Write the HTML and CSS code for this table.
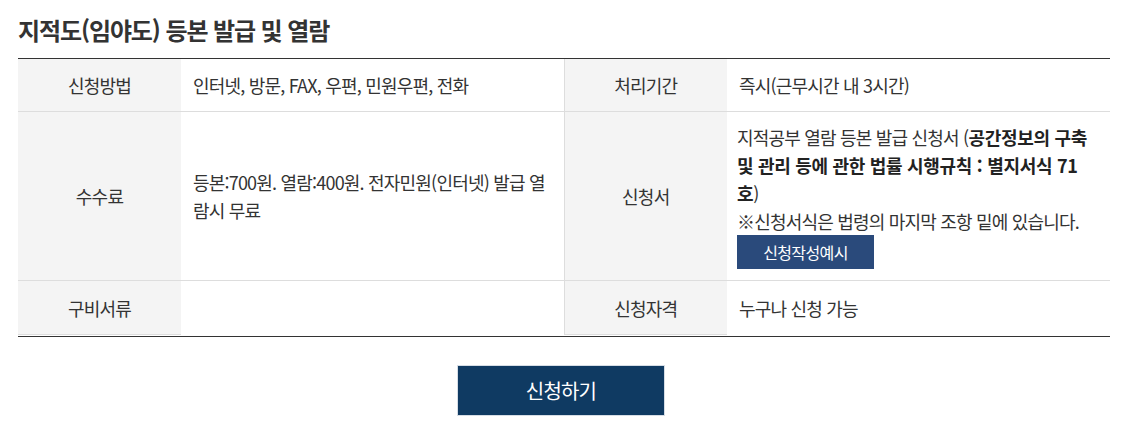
FILE: index.html
```html
<!DOCTYPE html>
<html lang="ko">
<head>
<meta charset="utf-8">
<title>지적도(임야도) 등본 발급 및 열람</title>
<link rel="stylesheet" href="styles.css">
</head>
<body>
<div class="page">
  <h2 class="title">지적도(임야도) 등본 발급 및 열람</h2>
  <div class="table-wrap">
  <table class="info">
    <colgroup>
      <col class="c-th"><col class="c-td"><col class="c-th"><col class="c-td">
    </colgroup>
    <tr>
      <th>신청방법</th>
      <td>인터넷, 방문, FAX, 우편, 민원우편, 전화</td>
      <th class="mid">처리기간</th>
      <td>즉시(근무시간 내 3시간)</td>
    </tr>
    <tr>
      <th>수수료</th>
      <td>등본:700원. 열람:400원. 전자민원(인터넷) 발급 열람시 무료</td>
      <th class="mid">신청서</th>
      <td class="form-cell">지적공부 열람 등본 발급 신청서 (<strong>공간정보의 구축 및 관리 등에 관한 법률 시행규칙 : 별지서식 71 호</strong>)<br>※신청서식은 법령의 마지막 조항 밑에 있습니다.<br><a class="btn-sample" href="#">신청작성예시</a></td>
    </tr>
    <tr class="last">
      <th>구비서류</th>
      <td></td>
      <th class="mid">신청자격</th>
      <td>누구나 신청 가능</td>
    </tr>
  </table>
  </div>
  <div class="actions">
    <a class="btn-apply" href="#">신청하기</a>
  </div>
</div>
</body>
</html>
```

FILE: styles.css
```css
* { box-sizing: border-box; }
body {
  margin: 0;
  background: #fff;
  font-family: "Noto Sans CJK KR", "Noto Sans", sans-serif;
  color: #333;
}
.page {
  width: 1092px;
  margin-left: 18px;
}
.title {
  margin: 14px 0 12px;
  font-size: 24px;
  line-height: 32px;
  font-weight: 700;
  color: #333;
  letter-spacing: -1.1px;
}
.table-wrap {
  border-top: 1px solid #333;
  border-bottom: 1px solid #333;
  padding-bottom: 1px;
}
.info {
  width: 100%;
  border-collapse: collapse;
  table-layout: fixed;
  font-size: 18px;
  line-height: 28px;
  letter-spacing: -0.8px;
}
.c-th { width: 163px; }
.c-td { width: 383px; }
.info th {
  background: #f4f4f4;
  font-weight: 400;
  color: #333;
  text-align: center;
  padding: 12px;
  border-bottom: 1px solid #ddd;
}
.info th.mid { border-left: 1px solid #ddd; }
.info td {
  padding: 12px;
  border-bottom: 1px solid #ddd;
  vertical-align: middle;
  color: #333;
}
.info td.form-cell { padding: 11px 10px 11px 10px; }
.info strong { font-weight: 700; color: #222; letter-spacing: -0.3px; }
.info tr.last th { padding-top: 13px; padding-bottom: 12px; }
.info tr.last td { border-bottom: none; }
.btn-sample {
  display: inline-block;
  background: #2a4a7b;
  color: #fff;
  text-decoration: none;
  font-size: 16px;
  line-height: 34px;
  height: 34px;
  width: 137px;
  text-align: center;
  letter-spacing: -0.6px;
  vertical-align: top;
}
.actions {
  display: flex;
  justify-content: center;
  margin-top: 28px;
  padding-right: 6px;
}
.btn-apply {
  display: block;
  width: 208px;
  height: 51px;
  line-height: 49px;
  text-align: center;
  background: #0f3a62;
  border: 1px solid #d6dde5;
  color: #fff;
  font-size: 20px;
  text-decoration: none;
  letter-spacing: -0.8px;
}
```
